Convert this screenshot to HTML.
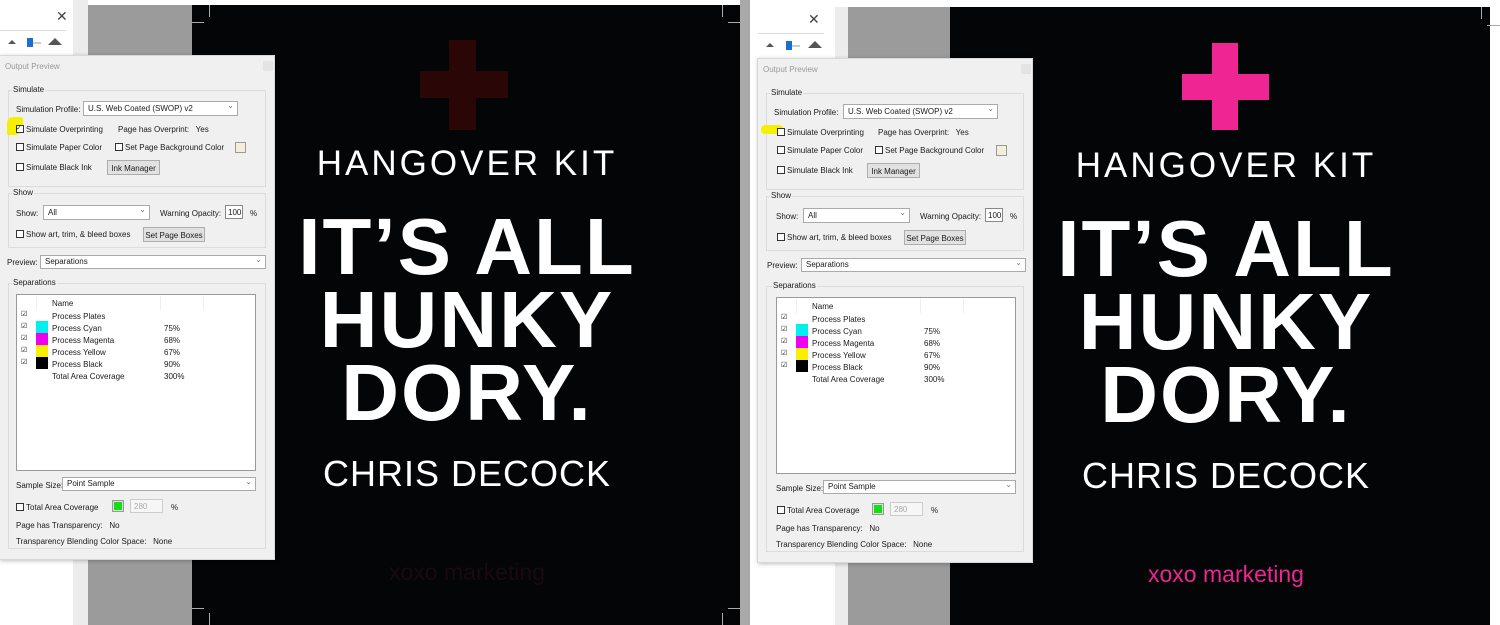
<!DOCTYPE html>
<html><head><meta charset="utf-8"><style>
*{margin:0;padding:0;box-sizing:border-box}
body{width:1500px;height:625px;position:relative;overflow:hidden;background:#fff;font-family:"Liberation Sans",sans-serif}
.a{position:absolute}
.blk{background:#030507}
.art{position:absolute;color:#fff;text-align:center;width:548px}
.hk{font-size:35px;letter-spacing:3px;font-weight:400}
.big{font-size:80px;font-weight:700;letter-spacing:2px;line-height:73px}
.cd{font-size:36px;letter-spacing:1px}
.dlg{position:absolute;width:276px;height:505px;background:#f0f0f0;border:1px solid #d8d8d8;box-shadow:1px 1px 4px rgba(0,0,0,.25);font-size:8px;color:#1a1a1a}
.dlg .a{white-space:nowrap}
.dlg .t{color:#999;font-size:8px}
.grp{position:absolute;border:1px solid #dcdcdc}
.sel{position:absolute;background:#fff;border:1px solid #aaa;height:15px;padding:2px 4px}
.sel:after{content:"⌄";position:absolute;right:3px;top:-1px;color:#777}
.cb{position:absolute;width:8px;height:8px;border:1px solid #333;background:#fff}
.btn{position:absolute;background:#e1e1e1;border:1px solid #adadad;height:15px;text-align:center;padding-top:3px}
.list{position:absolute;background:#fff;border:1px solid #999}
.sw{position:absolute;width:12px;height:12px}
.ck{position:absolute;font-size:7px}
</style></head><body>

<!-- LEFT SCREENSHOT -->
<div class="a" style="left:0;top:0;width:73px;height:625px;background:#fff"></div>
<div class="a" style="left:56px;top:8px;font-size:14px;color:#444">✕</div>
<div class="a" style="left:0;top:30px;width:66px;height:1px;background:#ddd"></div>
<div class="a" style="left:8px;top:40px;width:0;height:0;border-left:4px solid transparent;border-right:4px solid transparent;border-bottom:4px solid #555"></div>
<div class="a" style="left:27px;top:38px;width:6px;height:9px;background:#1a6fd0"></div>
<div class="a" style="left:33px;top:42px;width:8px;height:2px;background:#ccc"></div>
<div class="a" style="left:48px;top:38px;width:0;height:0;border-left:7px solid transparent;border-right:7px solid transparent;border-bottom:7px solid #555"></div>
<div class="a" style="left:73px;top:0;width:15px;height:625px;background:#ececec"></div>
<div class="a" style="left:88px;top:5px;width:104px;height:620px;background:#9b9b9b"></div>
<div class="a blk" style="left:192px;top:5px;width:548px;height:620px"></div>
<div class="a" style="left:740px;top:0;width:10px;height:625px;background:#a9a9a9"></div>
<div class="a" style="left:209px;top:5px;width:1px;height:12px;background:#aaa"></div>
<div class="a" style="left:192px;top:22px;width:12px;height:1px;background:#aaa"></div>
<div class="a" style="left:722px;top:5px;width:1px;height:12px;background:#aaa"></div>
<div class="a" style="left:728px;top:22px;width:12px;height:1px;background:#aaa"></div>
<div class="a" style="left:728px;top:608px;width:12px;height:1px;background:#aaa"></div>
<div class="a" style="left:722px;top:613px;width:1px;height:12px;background:#aaa"></div>
<div class="a" style="left:192px;top:608px;width:12px;height:1px;background:#aaa"></div>
<div class="a" style="left:209px;top:613px;width:1px;height:12px;background:#aaa"></div>
<div class="a" style="left:449px;top:40px;width:27px;height:90px;background:#2a0606"></div>
<div class="a" style="left:420px;top:71px;width:88px;height:27px;background:#2a0606"></div>
<div class="art hk" style="left:193px;top:144px">HANGOVER KIT</div>
<div class="art big" style="left:193px;top:210px">IT’S ALL<br>HUNKY<br>DORY.</div>
<div class="art cd" style="left:193px;top:453px">CHRIS DECOCK</div>
<div class="art" style="left:193px;top:559px;font-size:23px;color:#180a10">xoxo marketing</div>

<!-- RIGHT SCREENSHOT -->
<div class="a" style="left:750px;top:0;width:750px;height:7px;background:#fff"></div>
<div class="a" style="left:750px;top:7px;width:85px;height:618px;background:#fff"></div>
<div class="a" style="left:808px;top:11px;font-size:14px;color:#444">✕</div>
<div class="a" style="left:758px;top:33px;width:66px;height:1px;background:#ddd"></div>
<div class="a" style="left:766px;top:43px;width:0;height:0;border-left:4px solid transparent;border-right:4px solid transparent;border-bottom:4px solid #555"></div>
<div class="a" style="left:786px;top:41px;width:6px;height:9px;background:#1a6fd0"></div>
<div class="a" style="left:792px;top:45px;width:8px;height:2px;background:#ccc"></div>
<div class="a" style="left:808px;top:41px;width:0;height:0;border-left:7px solid transparent;border-right:7px solid transparent;border-bottom:7px solid #555"></div>
<div class="a" style="left:835px;top:7px;width:13px;height:618px;background:#ececec"></div>
<div class="a" style="left:848px;top:7px;width:102px;height:618px;background:#9b9b9b"></div>
<div class="a blk" style="left:950px;top:7px;width:540px;height:618px"></div>
<div class="a" style="left:1481px;top:7px;width:1px;height:12px;background:#aaa"></div>
<div class="a" style="left:1487px;top:25px;width:13px;height:1px;background:#aaa"></div>
<div class="a" style="left:1212px;top:43px;width:26px;height:87px;background:#ee2592"></div>
<div class="a" style="left:1182px;top:74px;width:87px;height:26px;background:#ee2592"></div>
<div class="art hk" style="left:952px;top:146px">HANGOVER KIT</div>
<div class="art big" style="left:952px;top:212px">IT’S ALL<br>HUNKY<br>DORY.</div>
<div class="art cd" style="left:952px;top:455px">CHRIS DECOCK</div>
<div class="art" style="left:952px;top:561px;font-size:23px;color:#ee2592">xoxo marketing</div>

<!-- DIALOGS -->
<div class="dlg" style="left:-1px;top:55px">
 <div class="a t" style="left:5px;top:6px">Output Preview</div>
 <div class="a" style="left:263px;top:5px;width:10px;height:10px;background:#e4e4e4"></div>
 <div class="grp" style="left:8px;top:34px;width:258px;height:97px"></div>
 <div class="a" style="left:12px;top:29px;background:#f0f0f0;padding:0 1px">Simulate</div>
 <div class="a" style="left:16px;top:49px">Simulation Profile:</div>
 <div class="sel" style="left:83px;top:45px;width:155px">U.S. Web Coated (SWOP) v2</div>
 <div class="a" style="left:7px;top:61px;width:16px;height:18px;background:#f4f000;border-radius:6px 3px 8px 2px"></div>
 <div class="cb" style="left:16px;top:69px"></div><div class="ck" style="left:16px;top:68px">✓</div>
 <div class="a" style="left:26px;top:69px">Simulate Overprinting</div>
 <div class="a" style="left:118px;top:69px">Page has Overprint:&nbsp;&nbsp; Yes</div>
 <div class="cb" style="left:16px;top:87px"></div><div class="a" style="left:26px;top:87px">Simulate Paper Color</div>
 <div class="cb" style="left:115px;top:87px"></div><div class="a" style="left:125px;top:87px">Set Page Background Color</div>
 <div class="a" style="left:235px;top:86px;width:11px;height:11px;border:1px solid #999;background:#f2f0d8"></div>
 <div class="cb" style="left:16px;top:107px"></div><div class="a" style="left:26px;top:107px">Simulate Black Ink</div>
 <div class="btn" style="left:107px;top:104px;width:53px">Ink Manager</div>
 <div class="grp" style="left:8px;top:137px;width:258px;height:55px"></div>
 <div class="a" style="left:12px;top:132px;background:#f0f0f0;padding:0 1px">Show</div>
 <div class="a" style="left:16px;top:153px">Show:</div>
 <div class="sel" style="left:43px;top:149px;width:107px">All</div>
 <div class="a" style="left:160px;top:153px">Warning Opacity:</div>
 <div class="a" style="left:225px;top:149px;width:18px;height:14px;background:#fff;border:1px solid #888;padding:2px">100</div>
 <div class="a" style="left:250px;top:153px">%</div>
 <div class="cb" style="left:16px;top:174px"></div><div class="a" style="left:26px;top:174px">Show art, trim, &amp; bleed boxes</div>
 <div class="btn" style="left:143px;top:171px;width:62px">Set Page Boxes</div>
 <div class="a" style="left:7px;top:202px">Preview:</div>
 <div class="sel" style="left:40px;top:199px;width:226px;height:14px;padding-top:1px">Separations</div>
 <div class="grp" style="left:8px;top:227px;width:258px;height:266px"></div>
 <div class="a" style="left:12px;top:222px;background:#f0f0f0;padding:0 1px">Separations</div>
 <div class="list" style="left:16px;top:238px;width:240px;height:177px">
  <div class="a" style="left:19px;top:1px;width:1px;height:14px;background:#eee"></div>
  <div class="a" style="left:143px;top:1px;width:1px;height:14px;background:#eee"></div>
  <div class="a" style="left:186px;top:1px;width:1px;height:14px;background:#eee"></div>
  <div class="a" style="left:35px;top:4px">Name</div>
  <div class="ck" style="left:4px;top:15px">☑</div><div class="a" style="left:35px;top:17px">Process Plates</div>
  <div class="ck" style="left:4px;top:27px">☑</div><div class="sw" style="left:19px;top:26px;background:#00f0f0"></div><div class="a" style="left:35px;top:29px">Process Cyan</div><div class="a" style="left:147px;top:29px">75%</div>
  <div class="ck" style="left:4px;top:39px">☑</div><div class="sw" style="left:19px;top:38px;background:#f000f0"></div><div class="a" style="left:35px;top:41px">Process Magenta</div><div class="a" style="left:147px;top:41px">68%</div>
  <div class="ck" style="left:4px;top:51px">☑</div><div class="sw" style="left:19px;top:50px;background:#f8f000"></div><div class="a" style="left:35px;top:53px">Process Yellow</div><div class="a" style="left:147px;top:53px">67%</div>
  <div class="ck" style="left:4px;top:63px">☑</div><div class="sw" style="left:19px;top:62px;background:#000"></div><div class="a" style="left:35px;top:65px">Process Black</div><div class="a" style="left:147px;top:65px">90%</div>
  <div class="a" style="left:35px;top:77px">Total Area Coverage</div><div class="a" style="left:147px;top:77px">300%</div>
 </div>
 <div class="a" style="left:16px;top:425px">Sample Size:</div>
 <div class="sel" style="left:62px;top:421px;width:194px;height:14px;padding-top:1px">Point Sample</div>
 <div class="cb" style="left:16px;top:447px"></div><div class="a" style="left:26px;top:447px">Total Area Coverage</div>
 <div class="a" style="left:112px;top:444px;width:12px;height:12px;border:1px solid #999;background:#ddd;padding:1px"><div style="width:8px;height:8px;background:#12e012"></div></div>
 <div class="a" style="left:130px;top:443px;width:33px;height:14px;background:#f6f6f6;border:1px solid #ccc;color:#aaa;padding:2px 3px">280</div>
 <div class="a" style="left:171px;top:447px">%</div>
 <div class="a" style="left:16px;top:465px">Page has Transparency:&nbsp;&nbsp; No</div>
 <div class="a" style="left:16px;top:481px">Transparency Blending Color Space:&nbsp;&nbsp; None</div>
</div>

<div class="dlg" style="left:757px;top:58px">
 <div class="a t" style="left:5px;top:6px">Output Preview</div>
 <div class="a" style="left:263px;top:5px;width:10px;height:10px;background:#e4e4e4"></div>
 <div class="grp" style="left:8px;top:34px;width:258px;height:97px"></div>
 <div class="a" style="left:12px;top:29px;background:#f0f0f0;padding:0 1px">Simulate</div>
 <div class="a" style="left:16px;top:49px">Simulation Profile:</div>
 <div class="sel" style="left:85px;top:45px;width:155px">U.S. Web Coated (SWOP) v2</div>
 <div class="a" style="left:3px;top:66px;width:22px;height:9px;background:#f4f000;border-radius:4px"></div>
 <div class="cb" style="left:19px;top:69px"></div>
 <div class="a" style="left:29px;top:69px">Simulate Overprinting</div>
 <div class="a" style="left:120px;top:69px">Page has Overprint:&nbsp;&nbsp; Yes</div>
 <div class="cb" style="left:19px;top:87px"></div><div class="a" style="left:29px;top:87px">Simulate Paper Color</div>
 <div class="cb" style="left:117px;top:87px"></div><div class="a" style="left:127px;top:87px">Set Page Background Color</div>
 <div class="a" style="left:238px;top:86px;width:11px;height:11px;border:1px solid #999;background:#f2f0d8"></div>
 <div class="cb" style="left:19px;top:107px"></div><div class="a" style="left:29px;top:107px">Simulate Black Ink</div>
 <div class="btn" style="left:109px;top:104px;width:53px">Ink Manager</div>
 <div class="grp" style="left:8px;top:137px;width:258px;height:55px"></div>
 <div class="a" style="left:12px;top:132px;background:#f0f0f0;padding:0 1px">Show</div>
 <div class="a" style="left:18px;top:153px">Show:</div>
 <div class="sel" style="left:45px;top:149px;width:107px">All</div>
 <div class="a" style="left:162px;top:153px">Warning Opacity:</div>
 <div class="a" style="left:227px;top:149px;width:18px;height:14px;background:#fff;border:1px solid #888;padding:2px">100</div>
 <div class="a" style="left:252px;top:153px">%</div>
 <div class="cb" style="left:19px;top:174px"></div><div class="a" style="left:29px;top:174px">Show art, trim, &amp; bleed boxes</div>
 <div class="btn" style="left:146px;top:171px;width:62px">Set Page Boxes</div>
 <div class="a" style="left:9px;top:202px">Preview:</div>
 <div class="sel" style="left:43px;top:199px;width:225px;height:14px;padding-top:1px">Separations</div>
 <div class="grp" style="left:8px;top:227px;width:258px;height:266px"></div>
 <div class="a" style="left:14px;top:222px;background:#f0f0f0;padding:0 1px">Separations</div>
 <div class="list" style="left:18px;top:238px;width:240px;height:177px">
  <div class="a" style="left:19px;top:1px;width:1px;height:14px;background:#eee"></div>
  <div class="a" style="left:143px;top:1px;width:1px;height:14px;background:#eee"></div>
  <div class="a" style="left:186px;top:1px;width:1px;height:14px;background:#eee"></div>
  <div class="a" style="left:35px;top:4px">Name</div>
  <div class="ck" style="left:4px;top:15px">☑</div><div class="a" style="left:35px;top:17px">Process Plates</div>
  <div class="ck" style="left:4px;top:27px">☑</div><div class="sw" style="left:19px;top:26px;background:#00f0f0"></div><div class="a" style="left:35px;top:29px">Process Cyan</div><div class="a" style="left:147px;top:29px">75%</div>
  <div class="ck" style="left:4px;top:39px">☑</div><div class="sw" style="left:19px;top:38px;background:#f000f0"></div><div class="a" style="left:35px;top:41px">Process Magenta</div><div class="a" style="left:147px;top:41px">68%</div>
  <div class="ck" style="left:4px;top:51px">☑</div><div class="sw" style="left:19px;top:50px;background:#f8f000"></div><div class="a" style="left:35px;top:53px">Process Yellow</div><div class="a" style="left:147px;top:53px">67%</div>
  <div class="ck" style="left:4px;top:63px">☑</div><div class="sw" style="left:19px;top:62px;background:#000"></div><div class="a" style="left:35px;top:65px">Process Black</div><div class="a" style="left:147px;top:65px">90%</div>
  <div class="a" style="left:35px;top:77px">Total Area Coverage</div><div class="a" style="left:147px;top:77px">300%</div>
 </div>
 <div class="a" style="left:18px;top:425px">Sample Size:</div>
 <div class="sel" style="left:65px;top:421px;width:193px;height:14px;padding-top:1px">Point Sample</div>
 <div class="cb" style="left:19px;top:447px"></div><div class="a" style="left:29px;top:447px">Total Area Coverage</div>
 <div class="a" style="left:114px;top:444px;width:12px;height:12px;border:1px solid #999;background:#ddd;padding:1px"><div style="width:8px;height:8px;background:#12e012"></div></div>
 <div class="a" style="left:132px;top:443px;width:33px;height:14px;background:#f6f6f6;border:1px solid #ccc;color:#aaa;padding:2px 3px">280</div>
 <div class="a" style="left:173px;top:447px">%</div>
 <div class="a" style="left:18px;top:465px">Page has Transparency:&nbsp;&nbsp; No</div>
 <div class="a" style="left:18px;top:481px">Transparency Blending Color Space:&nbsp;&nbsp; None</div>
</div>
</body></html>
